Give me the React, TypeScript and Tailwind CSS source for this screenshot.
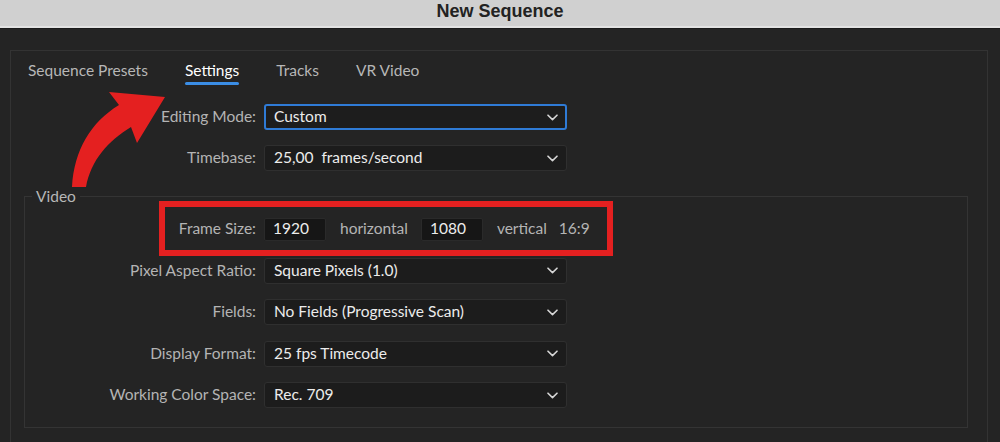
import React from "react";

const ChevronDown = () => (
  <svg width="11" height="7" viewBox="0 0 11 7" fill="none">
    <path
      d="M1 1.2 L5.5 5.6 L10 1.2"
      stroke="#d6d6d6"
      strokeWidth="1.6"
      strokeLinecap="round"
      strokeLinejoin="round"
    />
  </svg>
);

const Select = ({ value, focused }: { value: string; focused?: boolean }) => (
  <div
    className={
      focused
        ? "flex h-[26px] w-[303px] items-center justify-between rounded-[3px] border-2 border-[#2f7bd6] bg-[#1d1d1d] pl-[8px] pr-[7px]"
        : "flex h-[26px] w-[303px] items-center justify-between rounded-[3px] border border-[#2f2f2f] bg-[#1c1c1c] pl-[9px] pr-[8px]"
    }
  >
    <span className="whitespace-pre text-[#ececec]">{value}</span>
    <ChevronDown />
  </div>
);

const Row = ({
  label,
  wide,
  children
}: {
  label: string;
  wide?: boolean;
  children: React.ReactNode;
}) => (
  <div className="flex h-[26px] items-center">
    <div
      className={`${wide ? "w-[253px]" : "w-[239px]"} shrink-0 pr-[8px] text-right text-[#b4b4b4]`}
    >
      {label}
    </div>
    {children}
  </div>
);

const NumberBox = ({ value }: { value: string }) => (
  <div className="flex h-[23px] w-[62px] items-center rounded-[2px] border border-[#2a2a2a] bg-[#161616] pl-[8px] text-[#ececec]">
    {value}
  </div>
);

const Tabs = () => {
  const tabs = ["Sequence Presets", "Settings", "Tracks", "VR Video"];
  return (
    <div className="flex gap-[37px] pl-[17px] pt-[9px]">
      {tabs.map((t) => (
        <div key={t} className="flex flex-col items-stretch">
          <span className={t === "Settings" ? "leading-[20px] text-white" : "leading-[20px] text-[#b7b7b7]"}>
            {t}
          </span>
          <span
            className={
              t === "Settings"
                ? "mt-[2px] h-[3px] rounded-full bg-[#3b8ee6]"
                : "mt-[2px] h-[3px]"
            }
          />
        </div>
      ))}
    </div>
  );
};

const Arrow = () => (
  <svg
    className="pointer-events-none absolute left-0 top-0"
    width="200"
    height="200"
    viewBox="0 0 200 200"
  >
    <path
      d="M72 187 C74 150 91 122 119 105 L109 92 L165 97 L137 143 L131 127 C108 141 91 160 86 187 Z"
      fill="#e42020"
    />
  </svg>
);

export default function App() {
  return (
    <div
      className="relative h-[442px] w-[1000px] overflow-hidden bg-[#242424] text-[15.5px]"
      style={{ fontFamily: "Lato, 'Open Sans', sans-serif" }}
    >
      {/* title bar */}
      <div className="h-[26px] bg-[#d0d0d0] text-center">
        <span
          className="text-[18px] font-bold leading-[19px] text-[#222]"
          style={{ fontFamily: "'Liberation Sans', Arial, sans-serif" }}
        >
          New Sequence
        </span>
      </div>
      <div className="h-[2px] bg-[#e2e2e2]" />
      <div className="h-[1px] bg-[#1a1a1a]" />

      <div className="ml-[10px] mt-[21px] h-[420px] w-[978px] border border-[#333333]">
        <Tabs />

        <div className="mt-[19px] flex flex-col gap-[15px]">
          <Row label="Editing Mode:" wide>
            <Select value="Custom" focused />
          </Row>
          <Row label="Timebase:" wide>
            <Select value="25,00  frames/second" />
          </Row>
        </div>

        <fieldset className="ml-[13px] mt-[15px] w-[944px] border border-[#343434] px-0 pb-[19px] pt-[10px]">
          <legend className="ml-[7px] px-[4px] leading-[20px] text-[#b7b7b7]">Video</legend>
          <div className="flex flex-col gap-[15.5px]">
            <Row label="Frame Size:">
              <NumberBox value="1920" />
              <span className="ml-[14px] text-[#b4b4b4]">horizontal</span>
              <span className="ml-[13px]">
                <NumberBox value="1080" />
              </span>
              <span className="ml-[14px] text-[#b4b4b4]">vertical</span>
              <span className="ml-[12px] text-[#b4b4b4]">16:9</span>
            </Row>
            <Row label="Pixel Aspect Ratio:">
              <Select value="Square Pixels (1.0)" />
            </Row>
            <Row label="Fields:">
              <Select value="No Fields (Progressive Scan)" />
            </Row>
            <Row label="Display Format:">
              <Select value="25 fps Timecode" />
            </Row>
            <Row label="Working Color Space:">
              <Select value="Rec. 709" />
            </Row>
          </div>
        </fieldset>
      </div>

      {/* annotations */}
      <div className="pointer-events-none absolute left-[159px] top-[201px] h-[55px] w-[454px] border-[6px] border-[#e42020]" />
      <Arrow />
    </div>
  );
}
